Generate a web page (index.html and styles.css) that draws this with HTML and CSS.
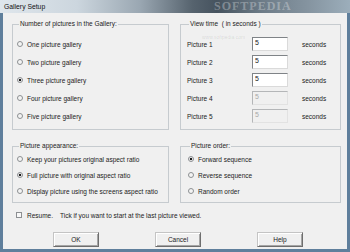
FILE: index.html
```html
<!doctype html>
<html lang="en">
  <head>
    <meta charset="utf-8">
    <title>Gallery Setup</title>
    <link rel="stylesheet" href="styles.css">
  </head>
  <body>
    <div class="window">
      <div class="titlebar">
        <span class="title">Gallery Setup</span>
        <span class="watermark">SOFTPEDIA</span>
      </div>
      <div class="client">
        <span class="site-mark">www.softpedia.com</span>
        <div class="groups">
          <fieldset class="group count">
            <legend>Number of pictures in the Gallery:</legend>
            <label class="radio"><span class="dot"></span>One picture gallery</label>
            <label class="radio"><span class="dot"></span>Two picture gallery</label>
            <label class="radio"><span class="dot checked"></span>Three picture gallery</label>
            <label class="radio"><span class="dot"></span>Four picture gallery</label>
            <label class="radio"><span class="dot"></span>Five picture gallery</label>
          </fieldset>
          <fieldset class="group times">
            <legend>View time &nbsp;( in seconds )</legend>
            <div class="time-row"><span>Picture 1</span><span class="field">5</span><span>seconds</span></div>
            <div class="time-row"><span>Picture 2</span><span class="field">5</span><span>seconds</span></div>
            <div class="time-row"><span>Picture 3</span><span class="field">5</span><span>seconds</span></div>
            <div class="time-row"><span>Picture 4</span><span class="field disabled">5</span><span>seconds</span></div>
            <div class="time-row"><span>Picture 5</span><span class="field disabled">5</span><span>seconds</span></div>
          </fieldset>
          <fieldset class="group appearance">
            <legend>Picture appearance:</legend>
            <label class="radio small"><span class="dot"></span>Keep your pictures original aspect ratio</label>
            <label class="radio small"><span class="dot checked"></span>Full picture with original aspect ratio</label>
            <label class="radio small"><span class="dot"></span>Display picture using the screens aspect ratio</label>
          </fieldset>
          <fieldset class="group order">
            <legend>Picture order:</legend>
            <label class="radio small"><span class="dot checked"></span>Forward sequence</label>
            <label class="radio small"><span class="dot"></span>Reverse sequence</label>
            <label class="radio small"><span class="dot"></span>Random order</label>
          </fieldset>
        </div>
        <label class="resume">
          <span class="box"></span>
          <span>Resume.</span>
          <span class="hint">Tick if you want to start at the last picture viewed.</span>
        </label>
        <div class="buttons">
          <button class="btn">OK</button>
          <button class="btn">Cancel</button>
          <button class="btn">Help</button>
        </div>
      </div>
    </div>
  </body>
</html>
```

FILE: styles.css
```css
body {
  margin: 0;
  font-family: "Liberation Sans", Arial, sans-serif;
  font-size: 6.5px;
  color: #222;
}
.window {
  position: relative;
  width: 350px;
  height: 252px;
  display: flex;
  flex-direction: column;
  background: #5f7f9c;
  overflow: hidden;
}
.titlebar {
  position: relative;
  height: 13px;
  display: flex;
  align-items: center;
  padding-left: 4px;
  overflow: hidden;
  background: linear-gradient(90deg, #dfe6ec 0%, #ccd6de 22%, #9aa7b2 40%, #56636e 55%, #46535f 62%, #6d7c88 75%, #8594a0 88%, #9caebb 100%);
}
.title {
  font-size: 6.8px;
  color: #111;
}
.watermark {
  position: absolute;
  left: 214px;
  top: 0;
  font-family: "Liberation Serif", serif;
  font-weight: bold;
  font-size: 12px;
  line-height: 13px;
  letter-spacing: 1px;
  color: rgba(255, 255, 255, 0.3);
}
.client {
  position: relative;
  flex: 1;
  margin: 0 3px 3px 3px;
  padding: 7px 6px 0 9px;
  background: #f0f0f0;
}
.site-mark {
  position: absolute;
  left: 199px;
  top: 21px;
  font-size: 5px;
  color: rgba(0, 0, 0, 0.12);
}
.groups {
  display: grid;
  grid-template-columns: 157px 161px;
  column-gap: 11px;
  row-gap: 12px;
}
.group {
  margin: 0;
  min-width: 0;
  border: 1px solid #c6cbcf;
}
.group legend {
  margin-left: 2px;
  padding: 0 1px;
  line-height: 8px;
}
.count {
  padding: 7px 0 4px 4px;
}
.times {
  padding: 7px 0 4px 6px;
}
.appearance {
  padding: 1px 0 3px 4px;
}
.order {
  padding: 1px 0 3px 7px;
}
.radio {
  display: flex;
  align-items: center;
  gap: 4px;
  height: 18px;
}
.radio.small {
  height: 16px;
}
.dot {
  box-sizing: border-box;
  width: 6px;
  height: 6px;
  border-radius: 50%;
  border: 1px solid #8c8f92;
  background: #f4f4f4;
}
.dot.checked {
  background: radial-gradient(circle, #1c1c1c 0 1.3px, #f4f4f4 1.6px);
}
.time-row {
  display: grid;
  grid-template-columns: 51px 36px auto;
  column-gap: 14px;
  align-items: center;
  height: 18px;
}
.field {
  box-sizing: border-box;
  height: 14px;
  padding: 1px 2px;
  font-size: 7px;
  line-height: 8px;
  background: #fff;
  border: 1px solid;
  border-color: #7f8387 #dadada #dadada #7f8387;
}
.field.disabled {
  background: #f0f0f0;
  color: #a8a8a8;
  border-color: #b4b6b8 #e2e2e2 #e2e2e2 #b4b6b8;
}
.resume {
  display: flex;
  align-items: center;
  height: 12px;
  margin-top: 6px;
  padding-left: 4px;
}
.box {
  box-sizing: border-box;
  width: 6px;
  height: 6px;
  margin-right: 5px;
  border: 1px solid #8c8f92;
  background: #f8f8f8;
}
.hint {
  margin-left: 7px;
}
.buttons {
  display: flex;
  gap: 56px;
  margin-top: 11px;
  padding-left: 41px;
}
.btn {
  box-sizing: border-box;
  width: 46px;
  height: 15px;
  padding: 0;
  font-family: inherit;
  font-size: 6.5px;
  color: #222;
  background: #f0f0f0;
  border: 1px solid;
  border-color: #c4c4c4 #6e6e6e #6e6e6e #c4c4c4;
  box-shadow: inset 1px 1px 0 #fff, inset -1px -1px 0 #a6a6a6;
}
```
